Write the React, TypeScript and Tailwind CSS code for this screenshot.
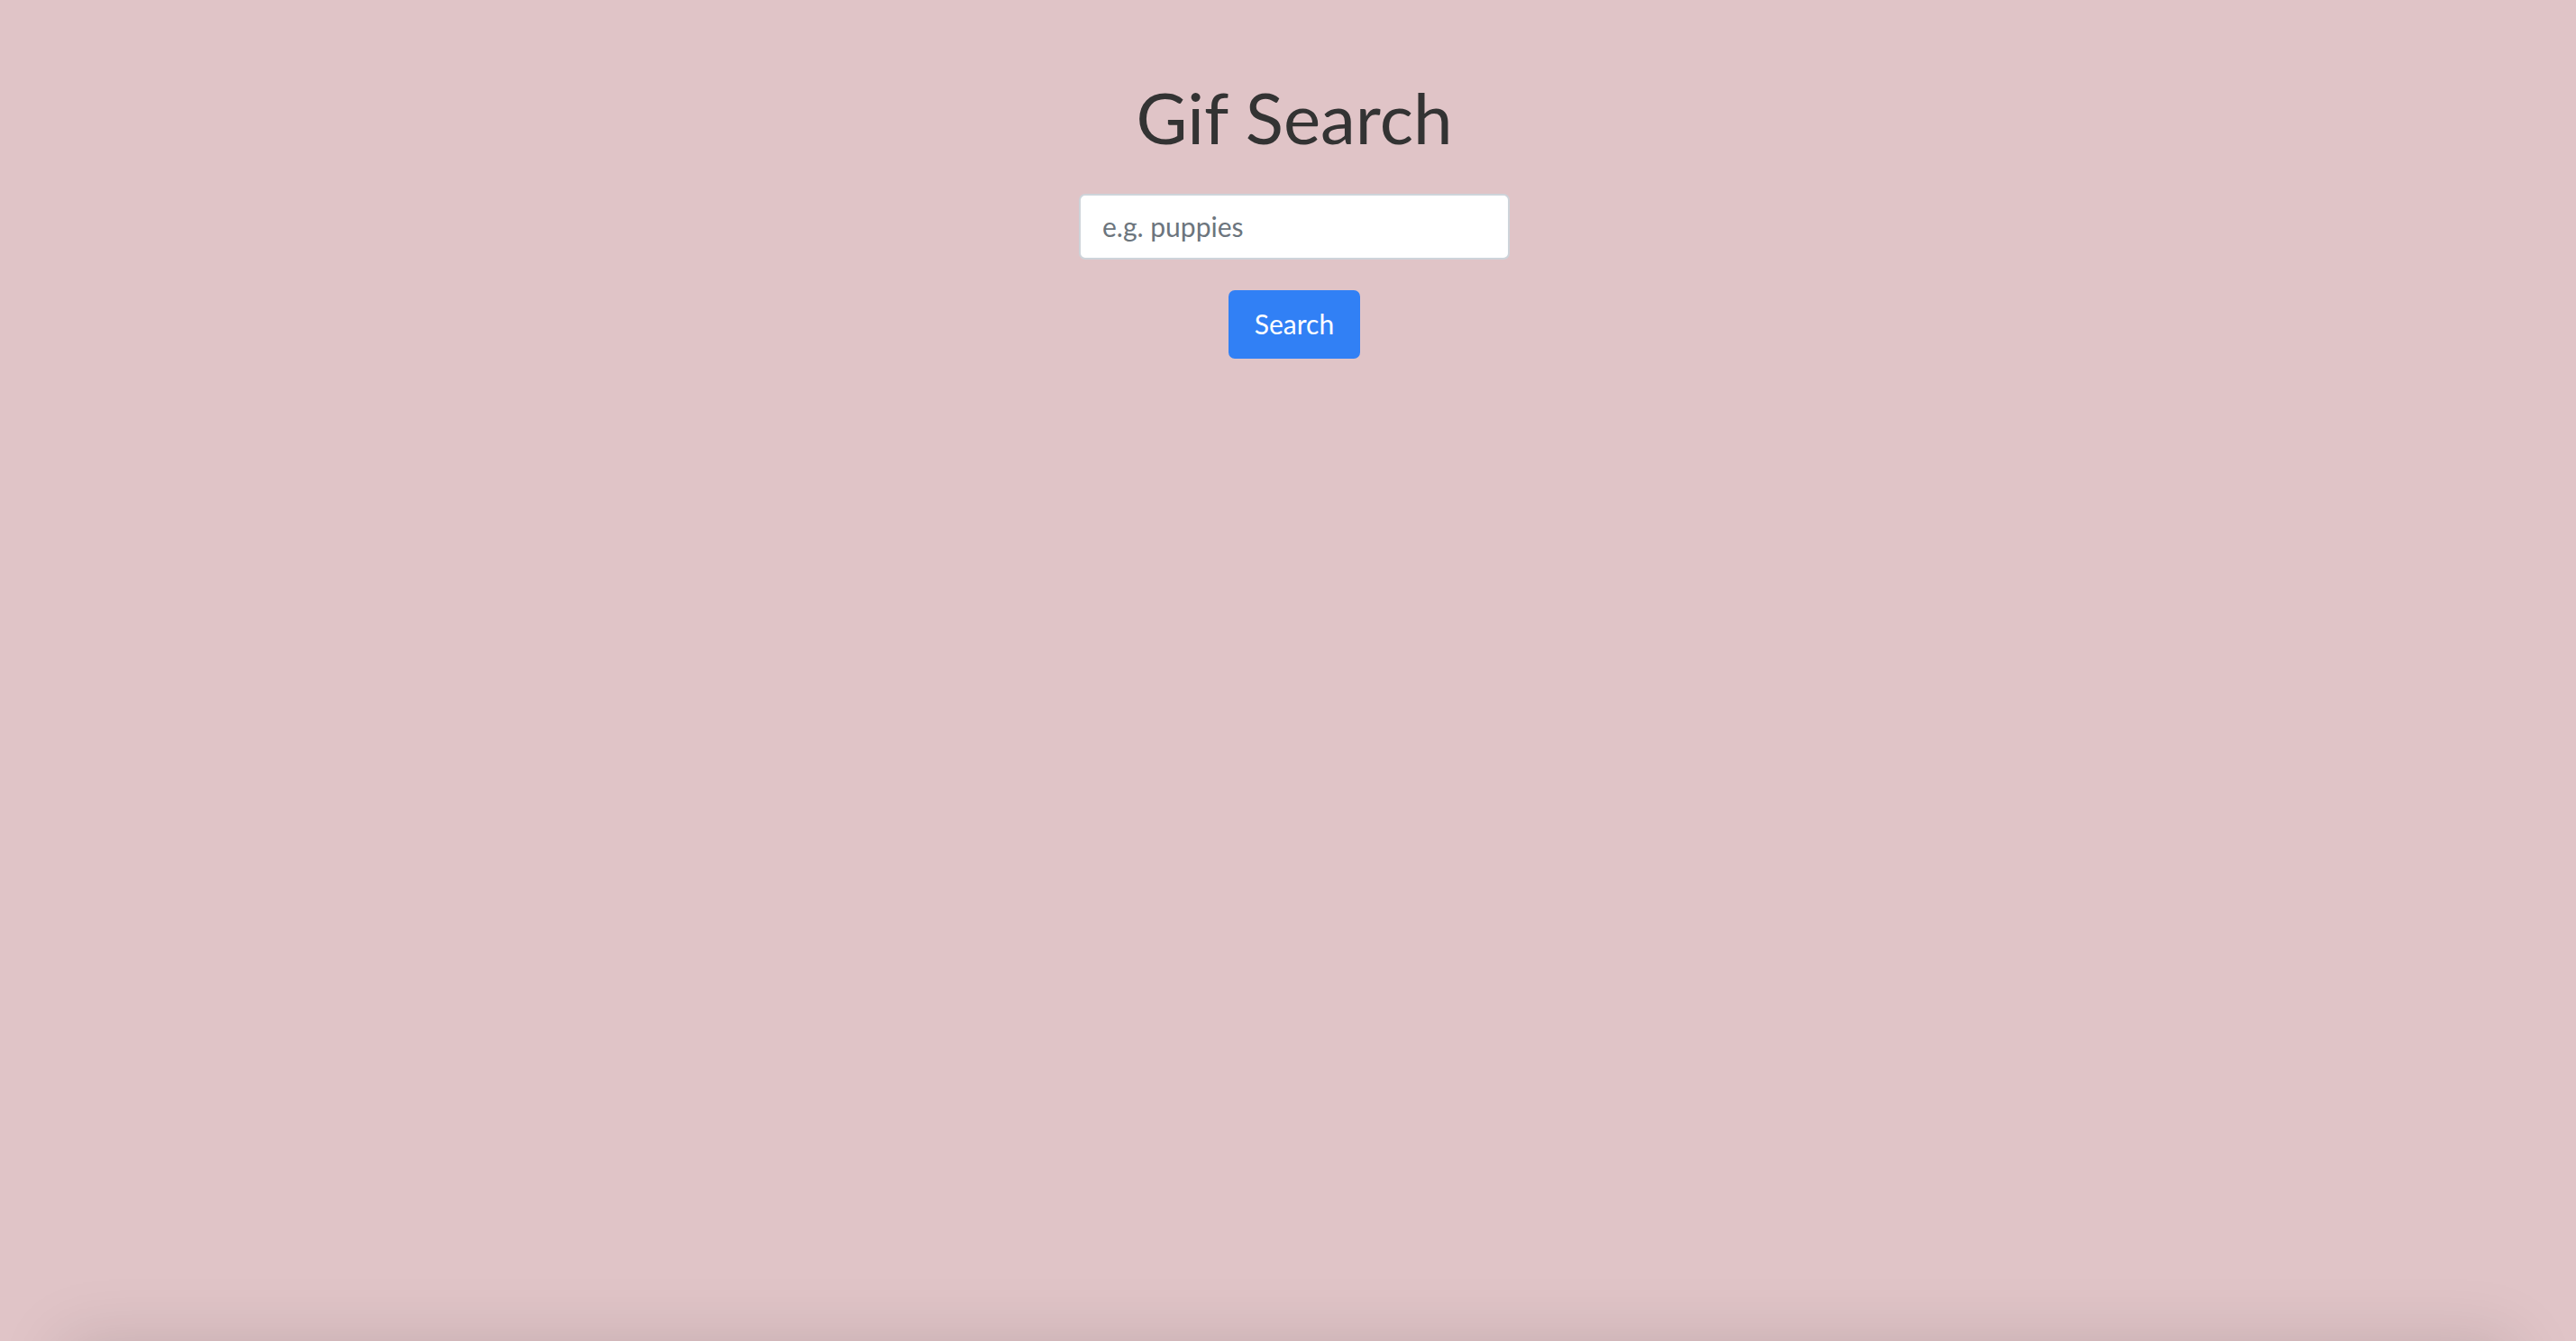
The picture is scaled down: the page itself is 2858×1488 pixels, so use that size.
export default function App() {
  return (
    <div className="h-[1488px] overflow-hidden bg-[#e0c4c7] font-['Lato',sans-serif]">
      <div className="flex h-[1488px] flex-col items-center pl-[14px] pt-[84px]">
        <h1 className="text-[78px] leading-[1.2] font-normal text-[#333333]">Gif Search</h1>
        <input
          type="text"
          placeholder="e.g. puppies"
          className="mt-[37px] h-[73px] w-[478px] rounded-[7px] border-2 border-[#ced4da] bg-white px-[24px] text-[30px] text-[#495057] outline-none placeholder:text-[#6c757d]"
        />
        <button className="mt-[34px] h-[76px] w-[146px] rounded-[7px] bg-[#3180f5] text-[30px] text-white">
          Search
        </button>
      </div>
      <div className="mx-[70px] h-[400px] bg-[#e0c4c7] shadow-[0_0_70px_rgba(0,0,0,0.13)]" />
    </div>
  )
}
